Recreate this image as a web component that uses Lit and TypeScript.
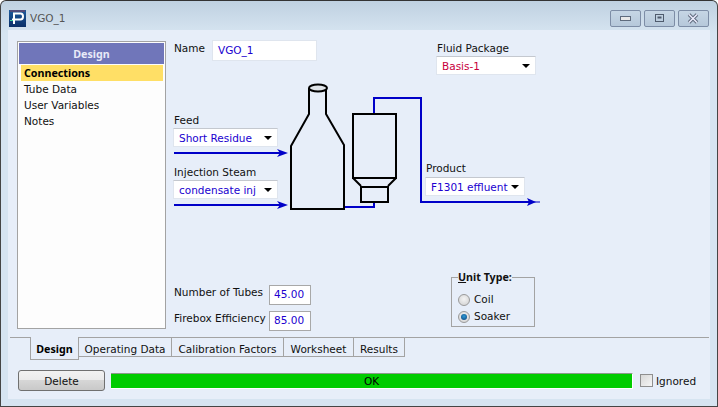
import { LitElement, html, css, svg } from 'lit';
import { customElement } from 'lit/decorators.js';

const TABS = [
  { label: 'Design', width: 49 },
  { label: 'Operating Data', width: 93 },
  { label: 'Calibration Factors', width: 112 },
  { label: 'Worksheet', width: 70 },
  { label: 'Results', width: 51 },
];

const NAV = ['Connections', 'Tube Data', 'User Variables', 'Notes'];

@customElement('app-root')
export class AppRoot extends LitElement {
  static styles = css`
    :host {
      display: block;
      width: 718px;
      height: 407px;
      font-family: 'DejaVu Sans', sans-serif;
      font-size: 10.5px;
      color: #111;
      background: #fff;
      overflow: hidden;
    }
    * { box-sizing: border-box; }

    .window {
      width: 718px;
      height: 407px;
      display: flex;
      flex-direction: column;
      border: 1px solid #454545;
      border-top-color: #333;
      border-radius: 6px 6px 0 0;
      background: linear-gradient(#bfd1e1 0, #d6e4f1 32px);
      padding: 0 7px 7px;
    }

    .titlebar {
      height: 29px;
      flex: none;
      display: flex;
      align-items: flex-start;
      gap: 3px;
      padding: 9px 1px 0 1px;
    }
    .title { font-size: 10.5px; color: #555; flex: 1; line-height: 17px; margin-left: 1px; }
    .ctl {
      width: 31px;
      height: 17px;
      border: 1px solid #7d8da6;
      border-radius: 2px;
      background: linear-gradient(#c6d6e5, #b6c8da);
      display: flex;
      align-items: center;
      justify-content: center;
    }

    .body {
      flex: 1;
      display: flex;
      flex-direction: column;
      background: #e7eef9;
    }
    .top { height: 307px; display: flex; flex: none; }

    .sidebar {
      width: 149px;
      height: 288px;
      margin: 11px 0 0 9px;
      border: 1px solid #a3a3a3;
      background: #fdfdfd;
      padding: 1px;
      flex: none;
    }
    .bold { font-family: 'Noto Sans', sans-serif; font-weight: bold; font-size: 10.7px; }
    .sidebar-head {
      height: 21px;
      background: #7076ba;
      color: #e8eaf8;
      text-align: center;
      line-height: 22px;
      margin-bottom: 1px;
    }
    .nav-item { height: 16px; line-height: 16px; padding: 0 3px; margin: 0 1px 0 2px; }
    .nav-item.on { background: #ffdf66; color: #000; }

    .main { flex: 1; display: flex; flex-direction: column; min-width: 0; }
    .header { height: 47px; padding: 10px 0 0 8px; display: flex; flex: none; }
    .name-row { display: flex; width: 262px; gap: 7px; }
    .name-row span { line-height: 16px; }
    .name-input {
      width: 105px;
      height: 21px;
      background: #fff;
      border: 1px solid #dfe5ee;
      color: #2000d0;
      padding: 0 5px;
      line-height: 18px;
    }
    .fluid { margin-top: 1px; }

    .canvas { height: 201px; flex: none; position: relative; }
    .canvas svg { position: absolute; inset: 0; }
    .field { display: flex; flex-direction: column; }
    .field label { height: 15px; line-height: 14px; padding-left: 1px; }
    .canvas .field { position: absolute; }
    .feed { left: 7px; top: 36px; }
    .steam { left: 7px; top: 88px; }
    .product { left: 259px; top: 85px; }
    .product label { line-height: 12px; }

    .combo {
      width: 105px;
      height: 19px;
      background: #fff;
      border: 1px solid #dfe5ee;
      border-top-color: #c4c8cf;
      color: #2000d0;
      display: flex;
      align-items: center;
      justify-content: space-between;
      padding: 0 5px 0 5px;
    }
    .combo.short { width: 100px; }
    .combo.red { color: #c8003c; }
    .caret {
      width: 0;
      height: 0;
      border-left: 4px solid transparent;
      border-right: 4px solid transparent;
      border-top: 4px solid #000;
    }

    .footer { flex: 1; display: flex; padding-left: 8px; }
    .params {
      width: 277px;
      display: flex;
      flex-direction: column;
      gap: 7px;
      padding-top: 7px;
    }
    .param { display: flex; align-items: center; height: 19px; }
    .param span { width: 95px; margin-top: -6px; }
    .param .num {
      width: 42px;
      height: 20px;
      border: 1px solid #a8a8a8;
      background: #fff;
      color: #2000d0;
      padding-left: 4px;
      line-height: 17px;
    }

    .group {
      width: 84px;
      height: 55px;
      margin: -6px 0 0 0;
      padding: 0 0 0 6px;
      border: 1px solid #a3a3a3;
      display: block;
    }
    .group legend {
      padding: 0;
      margin-left: 0;
      line-height: 11px;
    }
    .group u { text-decoration: underline; }
    .radio { display: flex; align-items: center; gap: 4px; height: 17px; line-height: 15px; }
    .radio span { margin-top: -1px; }
    .radio i {
      width: 12px;
      height: 12px;
      border-radius: 50%;
      border: 1px solid #9a9a9a;
      background: radial-gradient(circle at 50% 40%, #f4f4f4, #cfcfcf);
      display: flex;
      align-items: center;
      justify-content: center;
    }
    .radio i.on::after {
      content: '';
      width: 6px;
      height: 6px;
      border-radius: 50%;
      background: radial-gradient(circle at 50% 40%, #2f9bd6, #0a3f78);
    }
    .radios { margin-top: 8px; }

    .tabs { display: flex; height: 22px; flex: none; padding-left: 22px; position: relative; }
    .tabs::before {
      content: '';
      position: absolute;
      left: 2px;
      right: 1px;
      top: 0;
      height: 1px;
      background: #a3a3a3;
    }
    .tab {
      height: 20px;
      border-right: 1px solid #a3a3a3;
      border-bottom: 1px solid #a3a3a3;
      text-align: center;
      line-height: 25px;
      flex: none;
    }
    .tab.on {
      height: 23px;
      border-left: 1px solid #a3a3a3;
      color: #000;
      position: relative;
      background: #e7eef9;
    }

    .bottom { flex: 1; display: flex; align-items: flex-start; padding: 11px 0 0 10px; }
    .delete {
      width: 87px;
      height: 21px;
      border: 1px solid #707070;
      border-radius: 3px;
      background: linear-gradient(#f2f2f2, #ebebeb 45%, #d6d6d6 50%, #c9c9c9);
      text-align: center;
      line-height: 20px;
      flex: none;
    }
    .status {
      width: 522px;
      height: 16px;
      margin: 3px 0 0 6px;
      background: #00cc00;
      border-top: 1px solid #8a9a8a;
      border-right: 1px solid #fff;
      border-bottom: 1px solid #fff;
      text-align: center;
      line-height: 15px;
      color: #000;
      flex: none;
    }
    .ignored { display: flex; align-items: center; gap: 3px; margin: 4px 0 0 7px; height: 13px; }
    .check {
      width: 13px;
      height: 13px;
      border: 1px solid #8f8f8f;
      background: linear-gradient(135deg, #d8d8d8, #f6f6f6);
    }
  `;

  renderDiagram() {
    const black = 'fill:none;stroke:#000;stroke-width:2';
    const blue = 'fill:none;stroke:#0000c8;stroke-width:2';
    return svg`
      <g style=${blue}>
        <path d="M174 153H282" />
        <path d="M174 205H282" />
        <path d="M345 207H374V202" />
        <path d="M374 113V98H421V202H532" />
      </g>
      <path d="M532 202H540" stroke="#0000c8" />
      <g fill="#0000c8">
        <path d="M277 149L288 153L277 157L280 153Z" />
        <path d="M277 201L288 205L277 209L280 205Z" />
        <path d="M527 198L536 202L527 206L529 202Z" />
      </g>
      <g style=${black}>
        <path d="M309 88V114L291 146V209H344V145L326 114V88" />
        <ellipse cx="318" cy="88" rx="9" ry="3.500" style="fill:#dfe3e8" />
        <rect x="353" y="114" width="43" height="64" />
        <path d="M353 178L361 186M396 178L388 186" />
        <rect x="361" y="187" width="27" height="15" />
      </g>
    `;
  }

  render() {
    return html`
      <div class="window">
        <div class="titlebar">
          <svg width="17" height="17" viewBox="0 0 17 17">
            <defs>
              <linearGradient id="ico" x1="0" y1="0" x2="0" y2="1">
                <stop offset="0" stop-color="#1c5a9c" />
                <stop offset="1" stop-color="#0b2f68" />
              </linearGradient>
            </defs>
            <rect width="17" height="17" fill="url(#ico)" />
            <path d="M1 1H16" stroke="#d23030" stroke-width="1" opacity=".6" />
            <path d="M5 14V3.500H11.500Q14 3.500 14 6.500Q14 9.500 11.500 9.500H3" fill="none" stroke="#fff" stroke-width="2" />
            <path d="M1 10.500H4" stroke="#3fd0a0" stroke-width="1" />
          </svg>
          <span class="title">VGO_1</span>
          <div class="ctl">
            <svg width="12" height="6" viewBox="0 0 12 6"><rect x=".5" y=".5" width="10" height="4" fill="#e8e8e8" stroke="#5f6b7d" /></svg>
          </div>
          <div class="ctl">
            <svg width="12" height="11" viewBox="0 0 12 11"><rect x="1.500" y="1.500" width="8" height="7" fill="none" stroke="#4f5b6d" /><rect x="3.500" y="3.500" width="4" height="2" fill="#4f5b6d" /></svg>
          </div>
          <div class="ctl">
            <svg width="13" height="11" viewBox="0 0 13 11"><path d="M2 1.500L10 9.500M10 1.500L2 9.500" stroke="#5f6b7d" stroke-width="3.500" /><path d="M2 1.500L10 9.500M10 1.500L2 9.500" stroke="#eef" stroke-width="1.500" /></svg>
          </div>
        </div>
        <div class="body">
          <div class="top">
            <div class="sidebar">
              <div class="sidebar-head bold">Design</div>
              ${NAV.map((n, i) => html`<div class="nav-item ${i === 0 ? 'on bold' : ''}">${n}</div>`)}
            </div>
            <div class="main">
              <div class="header">
                <div class="name-row">
                  <span>Name</span>
                  <div class="name-input">VGO_1</div>
                </div>
                <div class="field fluid">
                  <label>Fluid Package</label>
                  <div class="combo short red">Basis-1<i class="caret"></i></div>
                </div>
              </div>
              <div class="canvas">
                <svg width="544" height="201" viewBox="166 77 544 201">${this.renderDiagram()}</svg>
                <div class="field feed">
                  <label>Feed</label>
                  <div class="combo">Short Residue<i class="caret"></i></div>
                </div>
                <div class="field steam">
                  <label>Injection Steam</label>
                  <div class="combo">condensate inj<i class="caret"></i></div>
                </div>
                <div class="field product">
                  <label>Product</label>
                  <div class="combo short">F1301 effluent<i class="caret"></i></div>
                </div>
              </div>
              <div class="footer">
                <div class="params">
                  <div class="param"><span>Number of Tubes</span><div class="num">45.00</div></div>
                  <div class="param"><span>Firebox Efficiency</span><div class="num">85.00</div></div>
                </div>
                <fieldset class="group">
                  <legend class="bold"><u>U</u>nit Type:</legend>
                  <div class="radios">
                    <div class="radio"><i></i><span>Coil</span></div>
                    <div class="radio"><i class="on"></i><span>Soaker</span></div>
                  </div>
                </fieldset>
              </div>
            </div>
          </div>
          <div class="tabs">
            ${TABS.map(
              (t, i) => html`<div class="tab ${i === 0 ? 'on bold' : ''}" style="width:${t.width}px">${t.label}</div>`
            )}
          </div>
          <div class="bottom">
            <div class="delete">Delete</div>
            <div class="status">OK</div>
            <div class="ignored"><div class="check"></div>Ignored</div>
          </div>
        </div>
      </div>
    `;
  }
}
